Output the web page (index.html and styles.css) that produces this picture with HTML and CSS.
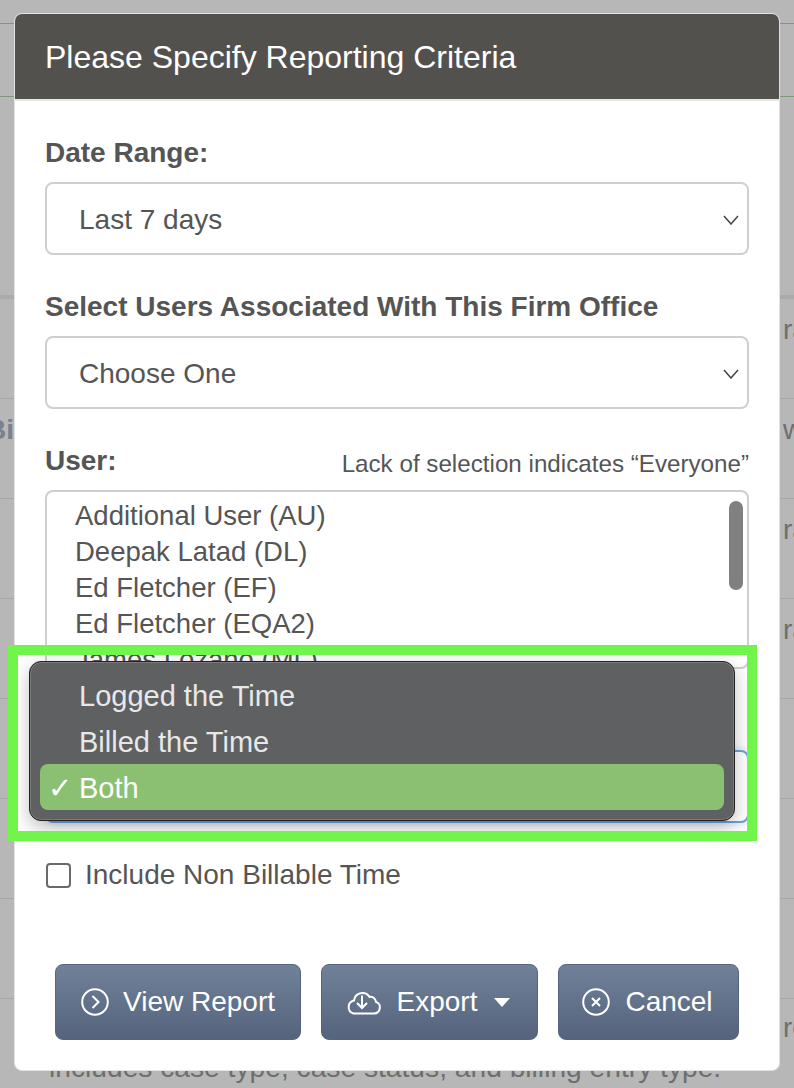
FILE: index.html
```html
<!DOCTYPE html>
<html lang="en">
<head>
    <meta charset="UTF-8">
    <meta name="viewport" content="width=device-width, initial-scale=1.0">
    <title>Reporting Criteria</title>
    <link rel="stylesheet" href="styles.css">
</head>
<body>
    <!-- page behind the dialog, only the edges show -->
    <div class="backdrop">
        <div class="backdrop-head"></div>
        <div class="backdrop-row"><span></span><span class="frag">ra</span></div>
        <div class="backdrop-row"><span class="frag-bold">Bi</span><span class="frag">w</span></div>
        <div class="backdrop-row"><span></span><span class="frag">ra</span></div>
        <div class="backdrop-row"><span></span><span class="frag">ra</span></div>
        <div class="backdrop-row"></div>
        <div class="backdrop-row"></div>
        <div class="backdrop-row"></div>
        <div class="backdrop-row backdrop-last"><span></span><span class="frag">re</span></div>
        <p class="backdrop-note">includes case type, case status, and billing entry type.</p>
    </div>

    <div class="modal">
        <div class="modal-header">Please Specify Reporting Criteria</div>
        <div class="modal-body">
            <label class="field-label">Date Range:</label>
            <div class="select-box">
                <span>Last 7 days</span>
                <svg class="chevron" viewBox="0 0 16 10"><path d="M1 1l7 8 7-8"/></svg>
            </div>

            <label class="field-label">Select Users Associated With This Firm Office</label>
            <div class="select-box">
                <span>Choose One</span>
                <svg class="chevron" viewBox="0 0 16 10"><path d="M1 1l7 8 7-8"/></svg>
            </div>

            <div class="label-row">
                <label class="field-label">User:</label>
                <span class="hint">Lack of selection indicates “Everyone”</span>
            </div>
            <div class="list-box">
                <div class="list-item">Additional User (AU)</div>
                <div class="list-item">Deepak Latad (DL)</div>
                <div class="list-item">Ed Fletcher (EF)</div>
                <div class="list-item">Ed Fletcher (EQA2)</div>
                <div class="list-item">James Lozano (ML)</div>
                <div class="scroll-thumb"></div>
            </div>

            <div class="select-box select-focus">
                <svg class="chevron" viewBox="0 0 16 10"><path d="M1 1l7 8 7-8"/></svg>
            </div>

            <div class="check-row">
                <span class="checkbox"></span>
                <span>Include Non Billable Time</span>
            </div>

            <div class="actions">
                <button class="btn btn-view">
                    <svg class="btn-icon" viewBox="0 0 28 28"><circle cx="14" cy="14" r="12.800"/><path d="M11.500 8l6 6-6 6"/></svg>
                    View Report
                </button>
                <button class="btn btn-export">
                    <svg class="cloud-icon" viewBox="0 0 36 26"><path d="M7.500 24.500H28a6 6 0 0 0 2-11.600 5.500 5.500 0 0 0-6.500-5A8.500 8.500 0 0 0 8 11.500a6.700 6.700 0 0 0-.5 13z"/><path d="M16 6.500v12M11 14l5 5 5-5"/></svg>
                    Export
                    <span class="caret"></span>
                </button>
                <button class="btn btn-cancel">
                    <svg class="btn-icon" viewBox="0 0 28 28"><circle cx="14" cy="14" r="12.800"/><path d="M10 10l8 8M18 10l-8 8"/></svg>
                    Cancel
                </button>
            </div>
        </div>
    </div>

    <!-- native select menu, open -->
    <div class="menu">
        <div class="menu-item">Logged the Time</div>
        <div class="menu-item">Billed the Time</div>
        <div class="menu-item menu-selected"><span class="tick">✓</span>Both</div>
    </div>

    <!-- green highlight around the menu -->
    <div class="highlight"></div>
</body>
</html>
```

FILE: styles.css
```css
html, body {
    margin: 0;
    height: 1088px;
    overflow: hidden;
}
body {
    position: relative;
    background-color: #b7b7b7;
    font-family: "Liberation Sans", Arial, sans-serif;
    font-size: 28px;
    color: #555;
}

/* backdrop */
.backdrop {
    height: 1088px;
    overflow: hidden;
    color: #6e6e6e;
}
.backdrop-head {
    height: 72px;
    margin-top: 23px;
    margin-bottom: 198px;
    border-top: 1px solid #7f9a7a;
    border-bottom: 1px solid #7f9a7a;
}
.backdrop-row {
    display: grid;
    grid-template-columns: 783px 1fr;
    height: 99px;
    border-top: 1px solid #a6a6a6;
    line-height: 62px;
    white-space: nowrap;
}
.backdrop-head + .backdrop-row {
    border-top: 4px solid #aaa;
}
.backdrop-last {
    height: 52px;
    line-height: 58px;
}
.frag-bold {
    margin-left: -14px;
    font-weight: bold;
    color: #77818f;
}
.backdrop-note {
    margin: 0 0 0 49px;
    font-size: 28.200px;
    line-height: 33px;
    white-space: nowrap;
}

/* dialog */
.modal {
    position: absolute;
    left: 14px;
    top: 13px;
    width: 766px;
    height: 1058px;
    box-sizing: border-box;
    background: #fff;
    border: 1px solid #e2e2e2;
    border-radius: 8px;
    overflow: hidden;
}
.modal-header {
    height: 87px;
    box-sizing: border-box;
    padding-left: 30px;
    background-color: #53514e;
    border-bottom: 2px solid #e6e6e6;
    color: #fff;
    font-size: 32px;
    line-height: 86px;
}
.modal-body {
    padding: 0 30px;
}
.field-label {
    display: block;
    font-weight: bold;
    line-height: 32px;
    padding-top: 36px;
    margin-bottom: 13px;
}
.select-box {
    display: flex;
    align-items: center;
    justify-content: space-between;
    height: 73px;
    box-sizing: border-box;
    padding: 2px 8px 0 32px;
    background: #fff;
    border: 2px solid #cfcfcf;
    border-radius: 8px;
}
.chevron {
    width: 16px;
    height: 10px;
    fill: none;
    stroke: #444;
    stroke-width: 1.5;
}
.label-row {
    display: flex;
    align-items: flex-end;
    justify-content: space-between;
    margin-bottom: 13px;
}
.label-row .field-label {
    margin-bottom: 0;
}
.hint {
    font-size: 24.200px;
    line-height: 27px;
}
.list-box {
    position: relative;
    height: 179px;
    box-sizing: border-box;
    padding: 6px 0 0 28px;
    border: 2px solid #cfcfcf;
    border-radius: 8px;
    font-size: 27.500px;
    overflow: hidden;
}
.list-item {
    line-height: 36px;
}
.scroll-thumb {
    position: absolute;
    top: 9px;
    right: 4px;
    width: 14px;
    height: 89px;
    border-radius: 7px;
    background-color: #808080;
}
.select-focus {
    margin-top: 81px;
    border-color: #6ea0d8;
    box-shadow: 0 0 10px rgba(110, 160, 216, 0.35);
}
.check-row {
    display: flex;
    align-items: center;
    gap: 14px;
    margin-top: 36px;
    margin-left: 1px;
}
.checkbox {
    width: 25px;
    height: 25px;
    box-sizing: border-box;
    border: 2px solid #6a6a6a;
    border-radius: 4px;
}
.actions {
    display: flex;
    gap: 20px;
    margin-top: 73px;
    padding-left: 10px;
}
.btn {
    display: flex;
    align-items: center;
    justify-content: center;
    height: 76px;
    padding: 0;
    border: 1px solid #56657d;
    border-radius: 8px;
    background: linear-gradient(#708199, #55647c);
    color: #fff;
    font-family: inherit;
    font-size: 28px;
}
.btn-view {
    width: 246px;
    gap: 14px;
}
.btn-export {
    width: 217px;
    gap: 15px;
    padding-right: 3px;
}
.btn-cancel {
    width: 181px;
    gap: 15px;
    padding-right: 2px;
}
.btn-icon {
    width: 28px;
    height: 28px;
    fill: none;
    stroke: #fff;
    stroke-width: 2;
}
.cloud-icon {
    width: 36px;
    height: 26px;
    fill: none;
    stroke: #fff;
    stroke-width: 2;
}
.caret {
    width: 0;
    height: 0;
    margin-left: 2px;
    border-left: 8.500px solid transparent;
    border-right: 8.500px solid transparent;
    border-top: 9px solid #fff;
}

/* open menu */
.menu {
    position: absolute;
    left: 29px;
    top: 661px;
    width: 706px;
    height: 160px;
    box-sizing: border-box;
    padding: 10px;
    background-color: #5f6062;
    border: 1px solid #222;
    border-radius: 12px;
    box-shadow: inset 0 0 0 1px #7a7a7a, 0 6px 18px rgba(0, 0, 0, 0.25);
    color: #e8e8e8;
    font-size: 29px;
}
.menu-item {
    position: relative;
    height: 46px;
    padding-left: 39px;
    line-height: 49px;
}
.menu-selected {
    background-color: #8bbf72;
    border-radius: 8px;
    color: #fff;
}
.tick {
    position: absolute;
    left: 8px;
    font-size: 29px;
}
.highlight {
    position: absolute;
    left: 8px;
    top: 645px;
    width: 729px;
    height: 176px;
    border: 10px solid #72f54a;
}
```
